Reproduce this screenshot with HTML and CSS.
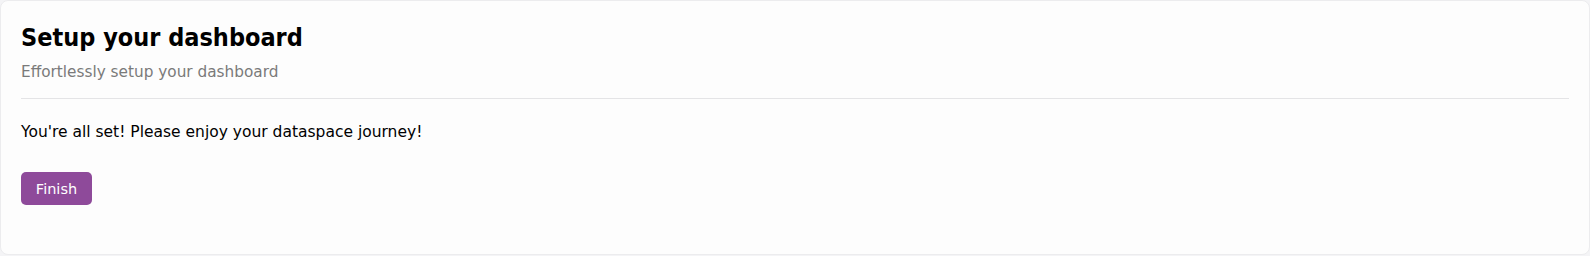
FILE: index.html
```html
<!DOCTYPE html>
<html lang="en">
<head>
<meta charset="utf-8">
<title>Setup your dashboard</title>
<link rel="stylesheet" href="styles.css">
</head>
<body>
<div class="card">
  <div class="card-header">
    <h2 class="title">Setup your dashboard</h2>
    <p class="subtitle">Effortlessly setup your dashboard</p>
  </div>
  <div class="card-body">
    <p class="message">You're all set! Please enjoy your dataspace journey!</p>
    <button class="btn-primary" type="button">Finish</button>
  </div>
</div>
</body>
</html>
```
FILE: styles.css
```css
html, body {
  margin: 0;
  padding: 0;
  background: #f4f4f6;
}
body {
  font-family: "DejaVu Sans", sans-serif;
  color: #000;
  height: 256px;
}
.card {
  height: 255px;
  box-sizing: border-box;
  background: #fdfdfd;
  border: 1px solid #ececee;
  border-radius: 8px;
  padding: 21px 20px 0 20px;
}
.card-header {
  border-bottom: 1px solid #e4e4e6;
  padding-bottom: 16px;
}
.title {
  margin: 0;
  font-family: "DejaVu Sans Condensed", "DejaVu Sans", sans-serif;
  font-size: 25px;
  font-weight: bold;
  line-height: 32px;
}
.subtitle {
  margin: 8px 0 0 0;
  font-size: 15.3px;
  line-height: 20px;
  color: #7a7a7a;
}
.card-body {
  padding-top: 23px;
}
.message {
  margin: 0;
  font-size: 15.5px;
  line-height: 20px;
}
.btn-primary {
  margin-top: 30px;
  display: block;
  font-family: inherit;
  font-size: 14.5px;
  color: #fff;
  background: #8e4a9a;
  border: none;
  border-radius: 5px;
  width: 71px;
  height: 33px;
  padding: 0;
}
```
